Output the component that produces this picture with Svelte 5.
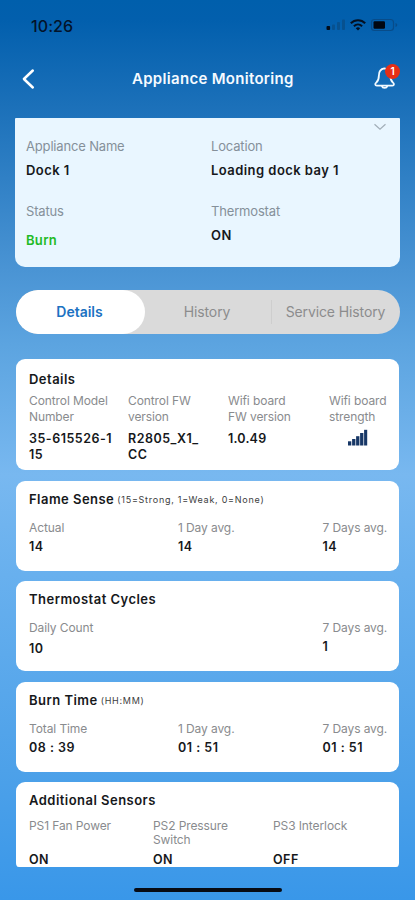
<script>
  const summary = [
    { label: 'Appliance Name', value: 'Dock 1' },
    { label: 'Location', value: 'Loading dock bay 1' },
    { label: 'Status', value: 'Burn', kind: 'burn' },
    { label: 'Thermostat', value: 'ON' }
  ];
  const tabs = ['Details', 'History', 'Service History'];
  let active = $state(0);
  const readings = [
    {
      title: 'Flame Sense', note: '(15=Strong, 1=Weak, 0=None)', name: 'flame',
      cells: [['Actual', '14'], ['1 Day avg.', '14'], ['7 Days avg.', '14']]
    },
    {
      title: 'Thermostat Cycles', note: '', name: 'cycles',
      cells: [['Daily Count', '10'], ['', ''], ['7 Days avg.', '1']]
    },
    {
      title: 'Burn Time', note: '(HH:MM)', name: 'time',
      cells: [['Total Time', '08 : 39'], ['1 Day avg.', '01 : 51'], ['7 Days avg.', '01 : 51']]
    }
  ];
</script>

<div class="screen">
  <div class="status">
    <span class="clock">10:26</span>
    <svg class="indicators" width="76" height="18" viewBox="0 0 76 18">
      <rect x="1.5" y="10" width="3.6" height="4" rx="1" fill="#020b18" />
      <g fill="#07518f">
        <rect x="7" y="8.5" width="3" height="5.5" rx="1" />
        <rect x="12" y="6" width="3" height="8" rx="1" />
        <rect x="17" y="3.5" width="3" height="10.5" rx="1" />
      </g>
      <g fill="none" stroke="#041022" stroke-width="2">
        <path d="M25.8 7.3a10 10 0 0 1 14.4 0" />
        <path d="M28.9 10.2a6 6 0 0 1 8.2 0" />
      </g>
      <path d="M30.8 12.2a3.2 3.2 0 0 1 4.4 0L33 14.5z" fill="#041022" />
      <rect x="46.5" y="3.5" width="22" height="11" rx="3" fill="none" stroke="#084c89" stroke-width="1.2" />
      <rect x="48.5" y="5.2" width="11.5" height="7.6" rx="1.2" fill="#010711" />
      <path d="M70.5 7v4q1.8-.6 1.8-2t-1.8-2z" fill="#084c89" />
    </svg>
  </div>

  <header>
    <svg class="back" width="16" height="22" viewBox="0 0 16 22">
      <path d="M12.8 2.5 3.9 11l8.9 8.5" fill="none" stroke="#fff" stroke-width="2.5" stroke-linecap="round" stroke-linejoin="round" />
    </svg>
    <h1>Appliance Monitoring</h1>
    <div class="bell">
      <svg width="24" height="26" viewBox="0 0 24 26">
        <g fill="none" stroke="#f3faff" stroke-width="1.8" stroke-linejoin="round" stroke-linecap="round">
          <path d="M11.3 3.4c-3.9.6-5.4 3.5-5.4 7 0 4.3-.8 5.6-2.7 7.2-1.4 1.2-1.2 3 .6 3h15.6c1.8 0 2-1.8.6-3-1.9-1.6-2.7-2.9-2.7-7.2 0-3.5-1.8-6.4-6-7z" />
          <path d="M9 21.3c.5 2.2 4.7 2.2 5.2 0" />
        </g>
      </svg>
      <span class="badge">1</span>
    </div>
  </header>

  <section class="summary">
    {#each summary as item}
      <div class="item">
        <div class="label">{item.label}</div>
        <div class="value {item.kind ?? ''}">{item.value}</div>
      </div>
    {/each}
    <svg class="chevron" width="14" height="8" viewBox="0 0 14 8">
      <path d="m1.5 1.2 5.5 5 5.5-5" fill="none" stroke="#a2aeb8" stroke-width="1.2" />
    </svg>
  </section>

  <nav>
    {#each tabs as tab, i}
      <button class:active={active === i} onclick={() => (active = i)}>{tab}</button>
    {/each}
  </nav>

  <main>
    <section class="card details">
      <h2>Details</h2>
      <div class="grid">
        <div><div class="label">Control Model<br />Number</div><div class="value">35-615526-1<br />15</div></div>
        <div><div class="label">Control FW<br />version</div><div class="value">R2805_X1_<br />CC</div></div>
        <div><div class="label">Wifi board<br />FW version</div><div class="value version">1.0.49</div></div>
        <div>
          <div class="label">Wifi board<br />strength</div>
          <svg class="strength" width="20" height="17" viewBox="0 0 20 17" fill="#173766">
            <rect x="0" y="12.3" width="3.3" height="4.2" />
            <rect x="4.1" y="10" width="3.3" height="6.5" />
            <rect x="8.1" y="7.2" width="3.3" height="9.3" />
            <rect x="12.1" y="4" width="3.3" height="12.5" />
            <rect x="16.1" y="0.8" width="3.1" height="15.7" />
          </svg>
        </div>
      </div>
    </section>

    {#each readings as card}
      <section class="card reading {card.name}">
        <h2>{card.title}{#if card.note}<small>{card.note}</small>{/if}</h2>
        <div class="grid">
          {#each card.cells as [label, value]}
            <div><div class="label">{label}</div><div class="value">{value}</div></div>
          {/each}
        </div>
      </section>
    {/each}

    <section class="card sensors">
      <h2>Additional Sensors</h2>
      <div class="grid">
        <div><div class="label">PS1 Fan Power</div><div class="value">ON</div></div>
        <div><div class="label">PS2 Pressure<br />Switch</div><div class="value">ON</div></div>
        <div><div class="label">PS3 Interlock</div><div class="value">OFF</div></div>
      </div>
    </section>
  </main>
  <div class="home"></div>
</div>

<style>
  :global(body) { margin: 0; }
  .screen {
    box-sizing: border-box;
    width: 415px;
    height: 900px;
    overflow: hidden;
    display: flex;
    flex-direction: column;
    font-family: Inter, 'Liberation Sans', sans-serif;
    color: #16181b;
    background: linear-gradient(#005fac 0, #025fad 20px, #1b70b9 105px, #4a94d4 270px, #5ca4e0 345px, #78b8f0 475px, #68b0ee 575px, #4da1e9 770px, #3997e9 900px);
  }
  .status {
    display: flex;
    justify-content: space-between;
    align-items: center;
    height: 52px;
    padding: 0 14px 0 31px;
    flex: none;
  }
  .clock { font-size: 16px; font-weight: 500; color: #031329; letter-spacing: 0.1px; margin-top: -1px; }
  .indicators { margin-top: -3px; }
  header {
    display: flex;
    align-items: center;
    height: 54px;
    padding: 0 15px 0 20px;
    flex: none;
  }
  h1 {
    margin: 0 auto 0 96px;
    font-size: 15px;
    line-height: 20px;
    font-weight: 600;
    color: #f5faff;
    letter-spacing: 0.3px;
    white-space: nowrap;
  }
  .bell { position: relative; width: 27px; height: 28px; }
  .badge {
    position: absolute;
    right: 0;
    top: -1px;
    width: 15px;
    height: 15px;
    border-radius: 50%;
    background: #e52e16;
    color: #fff;
    font-size: 10px;
    font-weight: 600;
    line-height: 15px;
    text-align: center;
  }
  .summary {
    position: relative;
    box-sizing: border-box;
    flex: none;
    width: 385px;
    height: 149px;
    margin: 12px 0 0 15px;
    padding: 18px 0 0 11px;
    display: grid;
    grid-template-columns: 185px 1fr;
    grid-template-rows: 65px 1fr;
    background: #e9f6ff;
    border-radius: 1px 1px 10px 10px;
  }
  .label { color: #898b8e; font-weight: 400; }
  .summary .label { font-size: 13px; line-height: 20px; color: #85909a; letter-spacing: -0.17px; }
  .summary .value { font-size: 13px; line-height: 20px; margin-top: 4px; font-weight: 600; letter-spacing: 0.45px; }
  .summary .value.burn { color: #1fba25; margin-top: 9px; letter-spacing: 0.3px; }
  .chevron { position: absolute; right: 13px; top: 5px; }
  nav {
    flex: none;
    box-sizing: border-box;
    display: flex;
    width: 384px;
    height: 44px;
    margin: 23px 0 25px 16px;
    border-radius: 22px;
    background: #dadada;
    overflow: hidden;
  }
  button {
    border: 0;
    padding: 0 2px 1px 0;
    width: 126px;
    background: none;
    font: 400 14px Inter, 'Liberation Sans', sans-serif;
    letter-spacing: -0.12px;
    color: #8c8c8d;
    position: relative;
  }
  button:first-child { width: 129px; }
  button:last-child { width: 129px; padding-right: 0; }
  button:last-child::before {
    content: '';
    position: absolute;
    left: 0;
    top: 10px;
    width: 1px;
    height: 24px;
    background: #cecece;
  }
  button.active { background: #fff; color: #1b72c2; font-weight: 600; border-radius: 22px; letter-spacing: 0; }
  main {
    flex: none;
    box-sizing: border-box;
    height: 508px;
    width: 383px;
    margin-left: 16px;
    overflow: hidden;
    display: flex;
    flex-direction: column;
    gap: 10.5px;
    border-radius: 0 0 3px 3px;
  }
  .card {
    flex: none;
    box-sizing: border-box;
    height: 90px;
    padding: 8px 0 0 13px;
    background: #fff;
    border-radius: 9px;
  }
  .details { height: 111px; padding-top: 10px; }
  h2 { margin: 0; height: 20px; font-size: 13px; line-height: 20px; font-weight: 600; letter-spacing: 0.47px; }
  small { font-size: 9px; line-height: 1; font-weight: 400; margin-left: 3px; color: #3c3d40; letter-spacing: 0.74px; position: relative; top: -1px; }
  .grid { display: grid; }
  .card .label { font-size: 12px; line-height: 16px; letter-spacing: -0.1px; }
  .card .value { font-size: 12.5px; line-height: 16px; font-weight: 600; letter-spacing: 0.5px; }
  .details .grid { grid-template-columns: 99px 100px 101px 1fr; margin-top: 4px; }
  .details .value { margin-top: 6px; line-height: 15.5px; }
  .details .version { letter-spacing: 0.2px; }
  .strength { display: block; margin: 4px 0 0 19px; }
  .reading .grid { grid-template-columns: 149px 144.5px 1fr; margin-top: 11px; }
  .reading .value { margin-top: 3px; }
  .cycles .grid > :first-child .value { margin-top: 5px; }
  .sensors .grid { grid-template-columns: 124px 120px 1fr; margin-top: 9px; }
  .sensors .label { height: 28px; line-height: 14px; }
  .sensors .value { margin-top: 5px; }
  .home {
    flex: none;
    width: 148px;
    height: 4px;
    border-radius: 2px;
    background: #070b14;
    margin: 21px 0 0 134px;
  }
</style>
